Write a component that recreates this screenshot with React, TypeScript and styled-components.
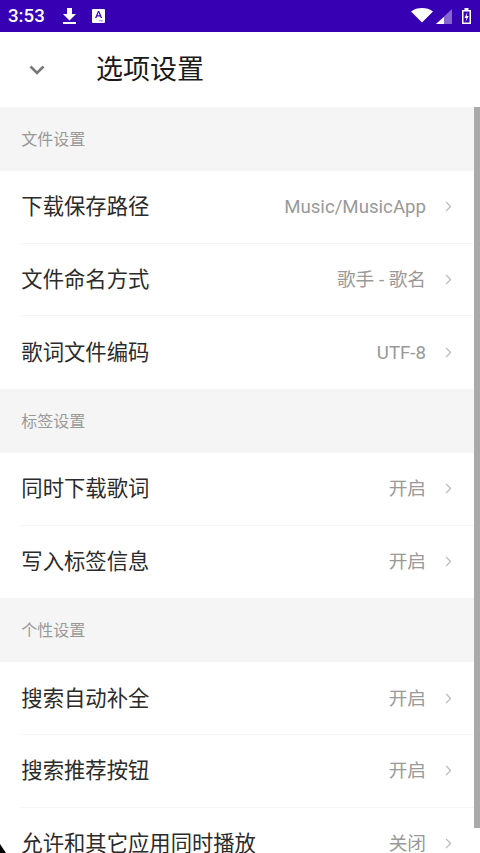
import styled, { createGlobalStyle } from "styled-components";
import { ChevronRight } from "lucide-react";

const GlobalStyle = createGlobalStyle`
  html, body {
    margin: 0;
    padding: 0;
    background-color: #fff;
    overflow: hidden;
  }
  * {
    box-sizing: border-box;
  }
`;

const Screen = styled.div`
  width: 480px;
  height: 853px;
  overflow: hidden;
  position: relative;
  font-family: Roboto, "Noto Sans CJK SC", sans-serif;
`;

const StatusBar = styled.div`
  height: 32px;
  background-color: #3700b3;
  display: flex;
  align-items: center;
  justify-content: space-between;
  padding: 0 8px 0 8px;
  color: #fff;
`;

const StatusLeft = styled.div`
  display: flex;
  align-items: center;
`;

const Clock = styled.span`
  font-size: 18.67px;
  font-weight: 500;
  width: 54px;
`;

const AppBadge = styled.svg`
  margin-left: 14px;
`;

const Header = styled.div`
  height: 75px;
  display: flex;
  align-items: center;
  background-color: #fff;
`;

const BackButton = styled.div`
  width: 96px;
  padding-left: 29px;
  display: flex;
  align-items: center;
`;

const Title = styled.h1`
  margin: 0;
  font-size: 27px;
  line-height: 34px;
  font-weight: 400;
  color: #1a1a1a;
`;

const SectionTitle = styled.div`
  height: 64px;
  background-color: #f5f5f5;
  display: flex;
  align-items: center;
  padding: 2px 0 0 21.33px;
  font-size: 16px;
  line-height: 22px;
  color: #999;
`;

const Row = styled.div`
  height: 72.67px;
  margin-left: 21.33px;
  padding-right: 23px;
  display: flex;
  align-items: center;
  justify-content: space-between;
  background-color: #fff;
  border-bottom: 1px solid #f5f5f5;

  &:last-child {
    border-bottom: none;
  }
`;

const RowLabel = styled.span`
  font-size: 21.33px;
  line-height: 28px;
  padding-top: 1px;
  color: #2b2b2b;
`;

const RowValue = styled.div`
  display: flex;
  align-items: center;
  gap: 14px;
  font-size: 18.67px;
  line-height: 26px;
  color: #999;
`;

const ValueText = styled.span`
  padding-top: 1px;
`;

const Scrollbar = styled.div`
  position: absolute;
  right: 0;
  top: 107px;
  width: 6px;
  height: 721px;
  background-color: #aaa;
`;

const ScreenCorner = styled.div`
  position: absolute;
  left: 0;
  bottom: 0;
  width: 6px;
  height: 9px;
  background-color: #000;
  clip-path: polygon(0 0, 100% 100%, 0 100%);
`;

type Item = { label: string; value: string };

const sections: { title: string; items: Item[] }[] = [
  {
    title: "文件设置",
    items: [
      { label: "下载保存路径", value: "Music/MusicApp" },
      { label: "文件命名方式", value: "歌手 - 歌名" },
      { label: "歌词文件编码", value: "UTF-8" },
    ],
  },
  {
    title: "标签设置",
    items: [
      { label: "同时下载歌词", value: "开启" },
      { label: "写入标签信息", value: "开启" },
    ],
  },
  {
    title: "个性设置",
    items: [
      { label: "搜索自动补全", value: "开启" },
      { label: "搜索推荐按钮", value: "开启" },
      { label: "允许和其它应用同时播放", value: "关闭" },
    ],
  },
];

function StatusIcons() {
  return (
    <svg width="62" height="18" viewBox="0 0 62 18">
      <path d="M1 4.500C4 2 8 1 12 1s8 1 11 3.500L12 15.500z" fill="#fff" />
      <path d="M42 2v15H26z" fill="#fff" fillOpacity="0.4" />
      <path d="M34 10v7H26z" fill="#fff" />
      <path
        fillRule="evenodd"
        d="M52 3h2.500V1h4v2H61v14h-9zM53.500 4.500v11h6v-11z"
        fill="#fff"
      />
      <path d="M57.500 5l-3 6h2l-1 4 3.200-6h-2z" fill="#fff" />
    </svg>
  );
}

export default function App() {
  return (
    <Screen>
      <GlobalStyle />
      <StatusBar>
        <StatusLeft>
          <Clock>3:53</Clock>
          <svg width="16" height="18" viewBox="0 0 16 18">
            <path d="M5 1h5v6h4l-6.500 6.500L1 7h4z" fill="#fff" />
            <rect x="1" y="15" width="13" height="2" fill="#fff" />
          </svg>
          <AppBadge width="14" height="14" viewBox="0 0 14 14">
            <rect width="13" height="14" rx="1" fill="#fff" />
            <path d="M3 9L6 2h1.200l3 7H8.800l-.6-1.600H5L4.400 9zM5.500 6.200h2.200L6.600 3.500z" fill="#3700b3" />
            <rect x="7" y="11" width="4" height="1.500" fill="#b9a6e0" />
          </AppBadge>
        </StatusLeft>
        <StatusIcons />
      </StatusBar>
      <Header>
        <BackButton>
          <svg width="16" height="10" viewBox="0 0 16 10">
            <path d="M1.500 1.500L8 8l6.500-6.500" fill="none" stroke="#777" strokeWidth="2.600" />
          </svg>
        </BackButton>
        <Title>选项设置</Title>
      </Header>
      {sections.map((section) => (
        <div key={section.title}>
          <SectionTitle>{section.title}</SectionTitle>
          {section.items.map((item) => (
            <Row key={item.label}>
              <RowLabel>{item.label}</RowLabel>
              <RowValue>
                <ValueText>{item.value}</ValueText>
                <ChevronRight size={17} color="#bbb" strokeWidth={1.6} />
              </RowValue>
            </Row>
          ))}
        </div>
      ))}
      <Scrollbar />
      <ScreenCorner />
    </Screen>
  );
}
